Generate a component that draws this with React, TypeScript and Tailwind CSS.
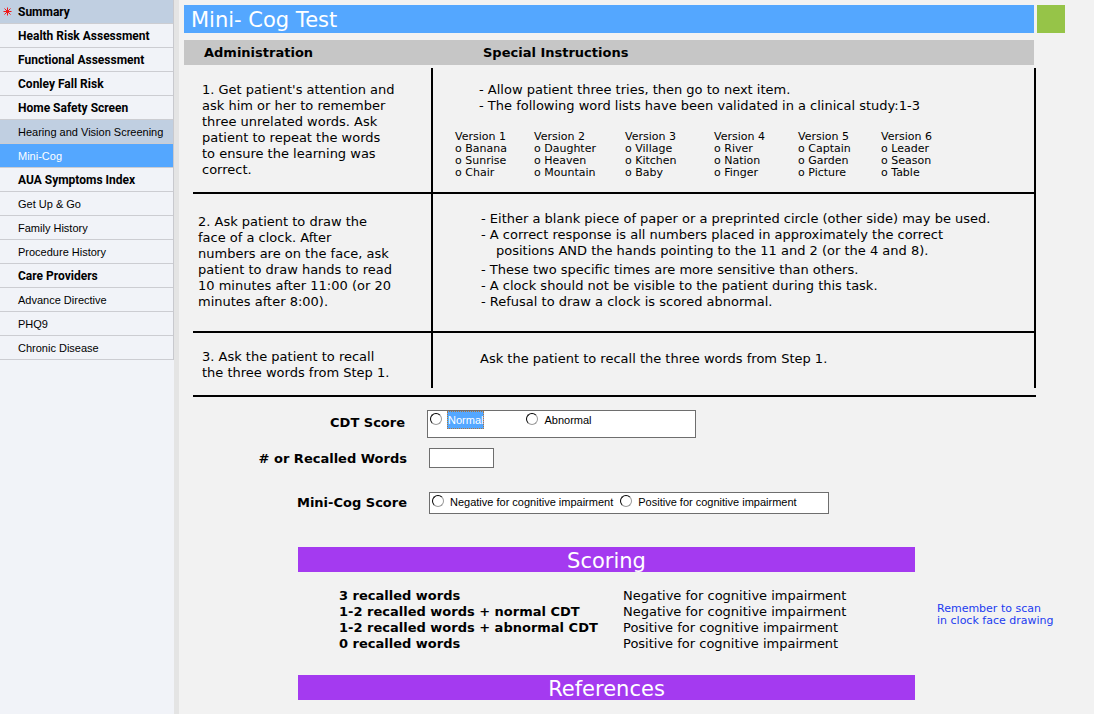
type NavItem = { label: string; bold?: boolean; tone?: 'shaded' | 'active'; flagged?: boolean };

const navItems: NavItem[] = [
  { label: 'Summary', bold: true, tone: 'shaded', flagged: true },
  { label: 'Health Risk Assessment', bold: true },
  { label: 'Functional Assessment', bold: true },
  { label: 'Conley Fall Risk', bold: true },
  { label: 'Home Safety Screen', bold: true },
  { label: 'Hearing and Vision Screening', tone: 'shaded' },
  { label: 'Mini-Cog', tone: 'active' },
  { label: 'AUA Symptoms Index', bold: true },
  { label: 'Get Up & Go' },
  { label: 'Family History' },
  { label: 'Procedure History' },
  { label: 'Care Providers', bold: true },
  { label: 'Advance Directive' },
  { label: 'PHQ9' },
  { label: 'Chronic Disease' },
];

const versions = [
  ['Banana', 'Sunrise', 'Chair'],
  ['Daughter', 'Heaven', 'Mountain'],
  ['Village', 'Kitchen', 'Baby'],
  ['River', 'Nation', 'Finger'],
  ['Captain', 'Garden', 'Picture'],
  ['Leader', 'Season', 'Table'],
];

const scoring = [
  ['3 recalled words', 'Negative for cognitive impairment'],
  ['1-2 recalled words + normal CDT', 'Negative for cognitive impairment'],
  ['1-2 recalled words + abnormal CDT', 'Positive for cognitive impairment'],
  ['0 recalled words', 'Positive for cognitive impairment'],
];

function Flag() {
  return (
    <svg viewBox="0 0 9 9" className="h-[9px] w-[9px]" stroke="#f01818" strokeWidth="1" aria-hidden="true">
      <path d="M4.5 0.5V8.5M0.5 4.5H8.5M1.5 1.5L7.5 7.5M7.5 1.5L1.5 7.5" />
    </svg>
  );
}

function Sidebar() {
  return (
    <nav className="w-[174px] shrink-0 bg-[#f1f3f8]">
      <ul className="border-r border-[#c8c9ce]">
        {navItems.map(({ label, bold, tone, flagged }) => {
          const color =
            tone === 'active' ? 'bg-[#54a7ff] text-white' : tone === 'shaded' ? 'bg-[#c0cfe1]' : 'bg-[#f1f3f8]';
          const font = bold ? "font-[Roboto,sans-serif] text-xs font-bold" : "font-['Liberation_Sans',sans-serif] text-[11px]";
          return (
            <li key={label}>
              <a href="#" className={`flex h-6 items-center border-b border-[#cccdd2] whitespace-nowrap ${color}`}>
                <span className="flex w-[18px] shrink-0 pl-[3px]">{flagged && <Flag />}</span>
                <span className={font}>{label}</span>
              </a>
            </li>
          );
        })}
      </ul>
    </nav>
  );
}

function Radio({ name, label, selected }: { name: string; label: string; selected?: boolean }) {
  return (
    <label className="flex h-[17px] items-start gap-[5px] font-['Liberation_Sans',sans-serif] text-[11px] whitespace-nowrap">
      <input
        type="radio"
        name={name}
        className="mt-0.5 h-3 w-3 appearance-none rounded-full border border-t-black border-r-[#9a9a9a] border-b-[#9a9a9a] border-l-black bg-white"
      />
      <span
        className={
          selected
            ? 'border border-dotted border-[#b0753a] bg-[#54a7ff] leading-4 text-white'
            : 'border border-transparent leading-4'
        }
      >
        {label}
      </span>
    </label>
  );
}

function Banner({ children }: { children: string }) {
  return <h2 className="h-[25px] bg-[#a43af0] text-center text-[21px] leading-7 text-white">{children}</h2>;
}

function Instructions() {
  return (
    <table className="w-full table-fixed border-separate border-spacing-0">
      <thead>
        <tr className="h-7 text-left">
          <th className="w-[249px] border-b-3 border-[#f2f2f2] bg-[#c6c6c6] bg-clip-padding p-0 pl-5 font-bold">Administration</th>
          <th className="border-r-2 border-b-3 border-[#f2f2f2] bg-[#c6c6c6] bg-clip-padding p-0 pl-[50px] font-bold">
            Special Instructions
          </th>
        </tr>
      </thead>
      <tbody className="align-top whitespace-nowrap">
        <tr>
          <td className="border-r-2 border-black p-0 pl-[9px]">
            <p className="min-h-[126px] border-b-2 border-black pt-3.5 pl-[9px]">
              1. Get patient's attention and
              <br />
              ask him or her to remember
              <br />
              three unrelated words. Ask
              <br />
              patient to repeat the words
              <br />
              to ensure the learning was
              <br />
              correct.
            </p>
          </td>
          <td className="border-r-2 border-b-2 border-black p-0 pt-3.5">
            <p className="pl-[46px]">- Allow patient three tries, then go to next item.</p>
            <p className="pl-[46px]">- The following word lists have been validated in a clinical study:1-3</p>
            <div className="mt-[17px] grid grid-cols-[79px_91px_89px_84px_83px_auto] pl-[22px] text-[11px] leading-3">
              {versions.map((words, i) => (
                <div key={words[0]}>
                  <p>Version {i + 1}</p>
                  {words.map((word) => (
                    <p key={word}>o {word}</p>
                  ))}
                </div>
              ))}
            </div>
          </td>
        </tr>
        <tr>
          <td className="border-r-2 border-black p-0 pl-[9px]">
            <p className="min-h-[139px] border-b-2 border-black pt-5 pl-[5px]">
              2. Ask patient to draw the
              <br />
              face of a clock. After
              <br />
              numbers are on the face, ask
              <br />
              patient to draw hands to read
              <br />
              10 minutes after 11:00 (or 20
              <br />
              minutes after 8:00).
            </p>
          </td>
          <td className="border-r-2 border-b-2 border-black p-0 pt-[17px] pl-12">
            <p>- Either a blank piece of paper or a preprinted circle (other side) may be used.</p>
            <p>- A correct response is all numbers placed in approximately the correct</p>
            <p className="mb-[3px] pl-[15px]">positions AND the hands pointing to the 11 and 2 (or the 4 and 8).</p>
            <p>- These two specific times are more sensitive than others.</p>
            <p>- A clock should not be visible to the patient during this task.</p>
            <p>- Refusal to draw a clock is scored abnormal.</p>
          </td>
        </tr>
        <tr className="h-[55px]">
          <td className="border-r-2 border-black p-0 pt-4 pl-[18px]">
            3. Ask the patient to recall
            <br />
            the three words from Step 1.
          </td>
          <td className="border-r-2 border-black p-0 pt-[18px] pl-[47px]">
            Ask the patient to recall the three words from Step 1.
          </td>
        </tr>
      </tbody>
    </table>
  );
}

export default function App() {
  return (
    <div className="flex min-h-screen bg-[#f2f2f2] font-['DejaVu_Sans',sans-serif] text-[13px] leading-4 text-black">
      <Sidebar />
      <div className="w-[5px] shrink-0 bg-[#e4e4e4]" />
      <main className="min-w-0 flex-1 pt-[5px] pr-[29px] pl-[5px]">
        <header className="flex gap-[3px]">
          <h1 className="h-7 flex-1 bg-[#54a7ff] pl-[7px] text-[21px] leading-[30px] text-white">Mini- Cog Test</h1>
          <div className="h-7 w-7 bg-[#96c448]" />
        </header>

        <section className="mt-[7px] mr-[29px]">
          <Instructions />
          <div className="ml-[9px] h-[9px] border-b-2 border-black" />
        </section>

        <form className="mt-[13px]">
          <div className="flex gap-[22px]">
            <span className="w-[221px] pt-[5px] text-right font-bold">CDT Score</span>
            <div role="radiogroup" aria-label="CDT Score" className="flex h-7 w-[269px] gap-[42px] border border-[#6e6e6e] bg-white pl-0.5">
              <Radio name="cdt" label="Normal" selected />
              <Radio name="cdt" label="Abnormal" />
            </div>
          </div>
          <div className="mt-2.5 flex gap-[22px]">
            <label htmlFor="recalled" className="w-[223px] pt-[3px] text-right font-bold whitespace-nowrap">
              # or Recalled Words
            </label>
            <input id="recalled" type="text" className="h-5 w-[65px] border border-[#6e6e6e] bg-white px-1 outline-none" />
          </div>
          <div className="mt-6 flex gap-[22px]">
            <span className="w-[223px] pt-[3px] text-right font-bold">Mini-Cog Score</span>
            <div role="radiogroup" aria-label="Mini-Cog Score" className="flex h-[22px] w-[400px] gap-1.5 border border-[#6e6e6e] bg-white pl-0.5">
              <Radio name="minicog" label="Negative for cognitive impairment" />
              <Radio name="minicog" label="Positive for cognitive impairment" />
            </div>
          </div>
        </form>

        <div className="mt-[33px] flex gap-[22px] pl-[114px]">
          <div className="w-[617px]">
            <Banner>Scoring</Banner>
            <table className="mt-4 ml-[41px]">
              <tbody>
                {scoring.map(([score, meaning]) => (
                  <tr key={score}>
                    <th className="w-[284px] p-0 text-left font-bold whitespace-nowrap">{score}</th>
                    <td className="p-0 whitespace-nowrap">{meaning}</td>
                  </tr>
                ))}
              </tbody>
            </table>
            <div className="mt-[23px]">
              <Banner>References</Banner>
            </div>
          </div>
          <p className="pt-14 text-[11px] leading-3 whitespace-nowrap text-[#1c3cf0]">
            Remember to scan
            <br />
            in clock face drawing
          </p>
        </div>
      </main>
    </div>
  );
}
